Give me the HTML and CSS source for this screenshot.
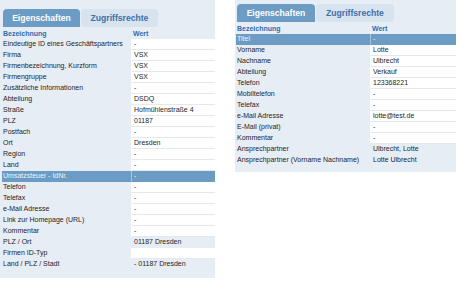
FILE: index.html
```html
<!DOCTYPE html>
<html lang="de">
<head>
<meta charset="utf-8">
<title>Eigenschaften</title>
<link rel="stylesheet" href="styles.css">
</head>
<body>
<div class="page">
  <section class="panel panel-left">
    <div class="tabs">
      <div class="tab tab-active">Eigenschaften</div>
      <div class="tab">Zugriffsrechte</div>
    </div>
    <div class="grid">
      <div class="row head"><div class="lbl">Bezeichnung</div><div class="val">Wert</div></div>
      <div class="row"><div class="lbl">Eindeutige ID eines Geschäftspartners</div><div class="val">-</div></div>
      <div class="row"><div class="lbl">Firma</div><div class="val">VSX</div></div>
      <div class="row"><div class="lbl">Firmenbezeichnung, Kurzform</div><div class="val">VSX</div></div>
      <div class="row"><div class="lbl">Firmengruppe</div><div class="val">VSX</div></div>
      <div class="row"><div class="lbl">Zusätzliche Informationen</div><div class="val">-</div></div>
      <div class="row"><div class="lbl">Abteilung</div><div class="val">DSDQ</div></div>
      <div class="row"><div class="lbl">Straße</div><div class="val">Hofmühlenstraße 4</div></div>
      <div class="row"><div class="lbl">PLZ</div><div class="val">01187</div></div>
      <div class="row"><div class="lbl">Postfach</div><div class="val">-</div></div>
      <div class="row"><div class="lbl">Ort</div><div class="val">Dresden</div></div>
      <div class="row"><div class="lbl">Region</div><div class="val">-</div></div>
      <div class="row"><div class="lbl">Land</div><div class="val">-</div></div>
      <div class="row selected"><div class="lbl">Umsatzsteuer - IdNr.</div><div class="val">-</div></div>
      <div class="row"><div class="lbl">Telefon</div><div class="val">-</div></div>
      <div class="row"><div class="lbl">Telefax</div><div class="val">-</div></div>
      <div class="row"><div class="lbl">e-Mail Adresse</div><div class="val">-</div></div>
      <div class="row"><div class="lbl">Link zur Homepage (URL)</div><div class="val">-</div></div>
      <div class="row"><div class="lbl">Kommentar</div><div class="val">-</div></div>
      <div class="row computed"><div class="lbl">PLZ / Ort</div><div class="val">01187 Dresden</div></div>
      <div class="row"><div class="lbl">Firmen ID-Typ</div><div class="val"></div></div>
      <div class="row computed"><div class="lbl">Land / PLZ / Stadt</div><div class="val">- 01187 Dresden</div></div>
    </div>
  </section>

  <section class="panel panel-right">
    <div class="tabs">
      <div class="tab tab-active">Eigenschaften</div>
      <div class="tab">Zugriffsrechte</div>
    </div>
    <div class="grid">
      <div class="row head"><div class="lbl">Bezeichnung</div><div class="val">Wert</div></div>
      <div class="row selected"><div class="lbl">Titel</div><div class="val">-</div></div>
      <div class="row"><div class="lbl">Vorname</div><div class="val">Lotte</div></div>
      <div class="row"><div class="lbl">Nachname</div><div class="val">Ulbrecht</div></div>
      <div class="row"><div class="lbl">Abteilung</div><div class="val">Verkauf</div></div>
      <div class="row"><div class="lbl">Telefon</div><div class="val">123368221</div></div>
      <div class="row"><div class="lbl">Mobiltelefon</div><div class="val">-</div></div>
      <div class="row"><div class="lbl">Telefax</div><div class="val">-</div></div>
      <div class="row"><div class="lbl">e-Mail Adresse</div><div class="val">lotte@test.de</div></div>
      <div class="row"><div class="lbl">E-Mail (privat)</div><div class="val">-</div></div>
      <div class="row"><div class="lbl">Kommentar</div><div class="val">-</div></div>
      <div class="row computed"><div class="lbl">Ansprechpartner</div><div class="val">Ulbrecht, Lotte</div></div>
      <div class="row computed"><div class="lbl">Ansprechpartner (Vorname Nachname)</div><div class="val">Lotte Ulbrecht</div></div>
    </div>
  </section>
</div>
</body>
</html>
```

FILE: styles.css
```css
html, body {
  margin: 0;
  padding: 0;
  background: #ffffff;
}

body {
  font-family: "Liberation Sans", Arial, sans-serif;
  font-size: 7px;
  color: #1e1e1e;
}

.page {
  display: flex;
  align-items: flex-start;
  gap: 20px;
}

.panel {
  background: #e7edf5;
  padding-left: 2px;
}

.panel-left {
  width: 213px;
  padding-top: 9px;
  padding-bottom: 8px;
}

.panel-right {
  width: 220px;
  padding-left: 1px;
  padding-top: 4px;
  padding-bottom: 6px;
}

.tabs {
  display: flex;
  gap: 1px;
  padding-left: 1px;
  margin-bottom: 1px;
}

.panel-right .tabs {
  padding-left: 1px;
}

.tab {
  width: 77px;
  height: 18px;
  line-height: 18px;
  text-align: center;
  font-size: 8.6px;
  font-weight: bold;
  color: #3d6fa9;
  background: #d7e3ef;
  border-radius: 4px;
}

.panel-right .tab {
  width: 78px;
}

.tab-active {
  background: #6c9bc4;
  color: #ffffff;
  border-radius: 4px 4px 0 0;
}

.grid {
  display: flex;
  flex-direction: column;
}

.row {
  display: grid;
  grid-template-columns: 129px 84px;
  height: 11px;
}

.panel-right .row {
  grid-template-columns: 134px 86px;
}

.lbl {
  padding-left: 1px;
  line-height: 10px;
  white-space: nowrap;
  overflow: hidden;
}

.val {
  padding-left: 2px;
  line-height: 10px;
  background: #ffffff;
  border-bottom: 1px solid #e5e9ef;
  border-left: 1px solid #ffffff;
  white-space: nowrap;
}

.head .lbl,
.head .val {
  background: transparent;
  border: none;
  font-weight: bold;
  color: #2e6cb1;
  line-height: 11px;
}

.computed .val {
  background: transparent;
  border-color: transparent;
}

.selected .lbl,
.selected .val {
  background: #6c9bc4;
  color: #eef4fa;
  border-bottom: 1px solid #6c9bc4;
}

.selected .lbl {
  line-height: 10px;
}

.selected .val {
  border-left-color: #a7c2dc;
}
```
